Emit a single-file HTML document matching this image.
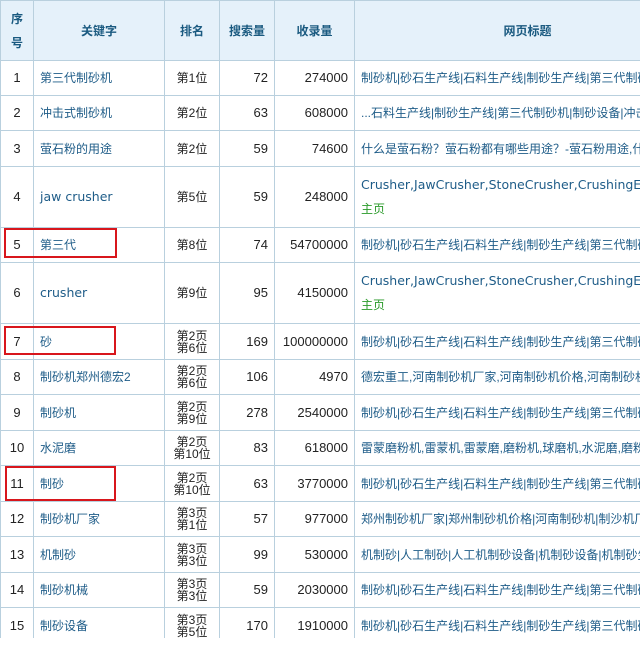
<!DOCTYPE html>
<html><head><meta charset="utf-8"><style>
body{margin:0;width:640px;height:652px;background:#fff;overflow:hidden;position:relative;font-family:"Liberation Sans","Noto Sans CJK SC",sans-serif;font-size:12px;color:#222}
.wrap{position:absolute;left:0;top:0;width:640px;height:638px;overflow:hidden}
table{border-collapse:collapse;table-layout:fixed;width:700px}
td,th{border:1px solid #b9d0de;padding:0;white-space:nowrap;overflow:hidden;line-height:14px}
th{background:#e5f1fa;color:#1a5a80;font-weight:bold;font-size:12px;height:59px}
td.n{text-align:center;font-size:13px}
td.k{color:#1e5c88;padding-left:6px}
td.r{text-align:center;line-height:12px}
td.num{text-align:right;padding-right:6px;font-size:13px}
td.t{color:#1e5c88;padding-left:6px}
.en{font-family:"DejaVu Sans",sans-serif;font-size:12.5px}
.g{color:#2a9a2a;display:block;margin-top:10px}
.box{position:absolute;border:2px solid #d8161c;box-sizing:border-box}
</style></head><body>
<div class="wrap">
<table>
<colgroup><col style="width:33px"><col style="width:131px"><col style="width:55px"><col style="width:55px"><col style="width:80px"><col style="width:346px"></colgroup>
<tr><th style="line-height:24px">序<br>号</th><th>关键字</th><th>排名</th><th>搜索量</th><th>收录量</th><th>网页标题</th></tr>
<tr style="height:35px"><td class="n">1</td><td class="k">第三代制砂机</td><td class="r">第1位</td><td class="num">72</td><td class="num">274000</td><td class="t">制砂机|砂石生产线|石料生产线|制砂生产线|第三代制砂机</td></tr>
<tr style="height:35px"><td class="n">2</td><td class="k">冲击式制砂机</td><td class="r">第2位</td><td class="num">63</td><td class="num">608000</td><td class="t">...石料生产线|制砂生产线|第三代制砂机|制砂设备|冲击式</td></tr>
<tr style="height:36px"><td class="n">3</td><td class="k">萤石粉的用途</td><td class="r">第2位</td><td class="num">59</td><td class="num">74600</td><td class="t">什么是萤石粉？萤石粉都有哪些用途？-萤石粉用途,什么</td></tr>
<tr style="height:61px"><td class="n">4</td><td class="k en">jaw crusher</td><td class="r">第5位</td><td class="num">59</td><td class="num">248000</td><td class="t"><span class="en">Crusher,JawCrusher,StoneCrusher,CrushingEquipment</span><span class="g">主页</span></td></tr>
<tr style="height:35px"><td class="n">5</td><td class="k">第三代</td><td class="r">第8位</td><td class="num">74</td><td class="num">54700000</td><td class="t">制砂机|砂石生产线|石料生产线|制砂生产线|第三代制砂机</td></tr>
<tr style="height:61px"><td class="n">6</td><td class="k en">crusher</td><td class="r">第9位</td><td class="num">95</td><td class="num">4150000</td><td class="t"><span class="en">Crusher,JawCrusher,StoneCrusher,CrushingEquipment</span><span class="g">主页</span></td></tr>
<tr style="height:36px"><td class="n">7</td><td class="k">砂</td><td class="r">第2页<br>第6位</td><td class="num">169</td><td class="num">100000000</td><td class="t">制砂机|砂石生产线|石料生产线|制砂生产线|第三代制砂机</td></tr>
<tr style="height:35px"><td class="n">8</td><td class="k">制砂机郑州德宏2</td><td class="r">第2页<br>第6位</td><td class="num">106</td><td class="num">4970</td><td class="t">德宏重工,河南制砂机厂家,河南制砂机价格,河南制砂机,</td></tr>
<tr style="height:36px"><td class="n">9</td><td class="k">制砂机</td><td class="r">第2页<br>第9位</td><td class="num">278</td><td class="num">2540000</td><td class="t">制砂机|砂石生产线|石料生产线|制砂生产线|第三代制砂机</td></tr>
<tr style="height:35px"><td class="n">10</td><td class="k">水泥磨</td><td class="r">第2页<br>第10位</td><td class="num">83</td><td class="num">618000</td><td class="t">雷蒙磨粉机,雷蒙机,雷蒙磨,磨粉机,球磨机,水泥磨,磨粉设备</td></tr>
<tr style="height:36px"><td class="n">11</td><td class="k">制砂</td><td class="r">第2页<br>第10位</td><td class="num">63</td><td class="num">3770000</td><td class="t">制砂机|砂石生产线|石料生产线|制砂生产线|第三代制砂机</td></tr>
<tr style="height:35px"><td class="n">12</td><td class="k">制砂机厂家</td><td class="r">第3页<br>第1位</td><td class="num">57</td><td class="num">977000</td><td class="t">郑州制砂机厂家|郑州制砂机价格|河南制砂机|制沙机厂家</td></tr>
<tr style="height:36px"><td class="n">13</td><td class="k">机制砂</td><td class="r">第3页<br>第3位</td><td class="num">99</td><td class="num">530000</td><td class="t">机制砂|人工制砂|人工机制砂设备|机制砂设备|机制砂生产</td></tr>
<tr style="height:35px"><td class="n">14</td><td class="k">制砂机械</td><td class="r">第3页<br>第3位</td><td class="num">59</td><td class="num">2030000</td><td class="t">制砂机|砂石生产线|石料生产线|制砂生产线|第三代制砂机</td></tr>
<tr style="height:36px"><td class="n">15</td><td class="k">制砂设备</td><td class="r">第3页<br>第5位</td><td class="num">170</td><td class="num">1910000</td><td class="t">制砂机|砂石生产线|石料生产线|制砂生产线|第三代制砂机</td></tr>
</table>
</div>
<div class="box" style="left:4px;top:228px;width:113px;height:30px"></div>
<div class="box" style="left:4px;top:326px;width:112px;height:29px"></div>
<div class="box" style="left:5px;top:466px;width:111px;height:35px"></div>
</body></html>
